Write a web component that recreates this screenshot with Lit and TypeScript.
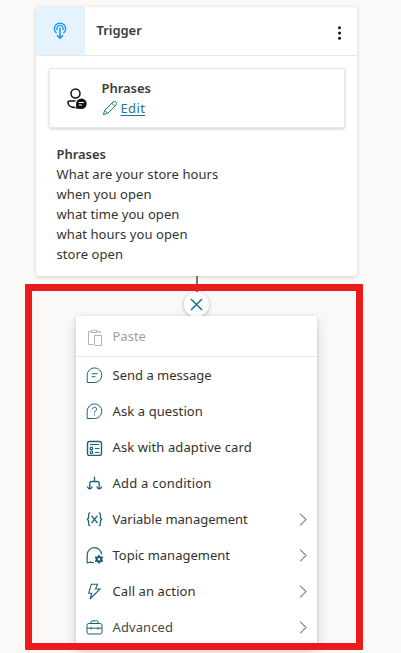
import { LitElement, html, css, svg, nothing } from 'lit';
import { customElement } from 'lit/decorators.js';

const icons = {
  paste: svg`<path d="M4.5 2.5H1.5V15.5H6M10 2.5H13V5M4.5 1.5H6Q7.2-.4 8.5 1.5H10V3.5H4.5ZM8 6.5H14.5V16.5H7.5V6.5Z"/>`,
  message: svg`<path d="M1.2 15.5V8.2A7.3 7.3 0 1 1 8.5 15.5ZM5.8 6.7H11.5M5.8 9.7H9.5"/>`,
  question: svg`<path d="M1.2 15.5V8.2A7.3 7.3 0 1 1 8.5 15.5Z"/><path d="M6.4 6.3C6.4 3.5 10.6 3.6 10.6 6.1C10.6 7.8 8.5 7.8 8.5 9.9M8.5 11.2V12.3"/>`,
  card: svg`<rect x="1.5" y="2.5" width="14" height="14" rx="2" stroke-width="1.4"/><path stroke-width="1.2" d="M4 5.5H13.3M9 9.5H13.5M9 13.5H13.5"/><circle cx="5.5" cy="9.4" r="1.3" stroke-width="1.2"/><circle cx="5.5" cy="13.3" r="1.3" stroke-width="1.2"/>`,
  condition: svg`<path stroke-width="1.3" d="M8.5 1.5V6.5M3.8 13.2V8.5Q3.8 6.5 5.8 6.5H11.2Q13.2 6.5 13.2 8.5V13.2M1.3 11.5Q2.3 13.9 3.8 13.9T6.3 11.5M10.7 11.5Q11.7 13.9 13.2 13.9T15.7 11.5"/>`,
  variable: svg`<path stroke-width="1.25" d="M4.3 1.8C2.5 1.8 2.6 3 2.6 5.6C2.6 7.6 2 8.3.8 8.3C2 8.3 2.6 9 2.6 11C2.6 13.8 2.5 14.8 4.3 14.8M12.7 1.8C14.5 1.8 14.4 3 14.4 5.6C14.4 7.6 15 8.3 16.2 8.3C15 8.3 14.4 9 14.4 11C14.4 13.8 14.5 14.8 12.7 14.8M5.5 4.6L11.5 12M11.5 4.6L5.5 12"/>`,
  topic: svg`<path stroke-width="1.2" d="M8 15.5H6L5 15.2L1.2 15.8V8A7.2 7.2 0 0 1 15.6 7.6"/><circle cx="13" cy="12.3" r="2.3" stroke-width="2.2"/><path stroke-width="1.8" d="M13 8V9.4M13 15.2V16.6M9.1 10.1L10.5 10.9M15.5 13.7L16.9 14.5M9.1 14.5L10.5 13.7M15.5 10.9L16.9 10.1"/>`,
  action: svg`<path stroke-width="1.1" d="M5.3 1.2H11.5L9.5 6H14L4 16L5.8 10.2H2.7Z"/>`,
  toolbox: svg`<rect x="1" y="4.5" width="15" height="10.5" rx="1.8"/><path d="M5 4.5V3Q5 1.8 6.2 1.8H10.8Q12 1.8 12 3V4.5M1 9.2H16M5 8V10.5M12 8V10.5"/>`,
};

type IconName = keyof typeof icons;
const icon = (name: IconName) => html`<svg class="icon" viewBox="0 0 17 17">${icons[name]}</svg>`;

const actions: { icon: IconName; label: string; more?: boolean; tone?: string }[] = [
  { icon: 'message', label: 'Send a message' },
  { icon: 'question', label: 'Ask a question', tone: 'wide' },
  { icon: 'card', label: 'Ask with adaptive card', tone: 'wide' },
  { icon: 'condition', label: 'Add a condition', tone: 'wider' },
  { icon: 'variable', label: 'Variable management', more: true },
  { icon: 'topic', label: 'Topic management', more: true },
  { icon: 'action', label: 'Call an action', more: true, tone: 'wide' },
  { icon: 'toolbox', label: 'Advanced', more: true, tone: 'last' },
];

const phrases = ['What are your store hours', 'when you open', 'what time you open', 'what hours you open', 'store open'];

@customElement('app-root')
export class AppRoot extends LitElement {
  static styles = css`
    :host { display: block; height: 653px; overflow: hidden; background: #faf9f8; color: #323130;
      font: 13px/20px "Noto Sans", "Open Sans", sans-serif; }
    * { box-sizing: border-box; }
    svg { display: block; fill: none; stroke: currentColor; flex: none; }
    .canvas { position: relative; height: 653px; padding-top: 7px; }
    .node { width: 321px; height: 269px; margin-left: 36px; background: #fff; border-radius: 4px;
      box-shadow: 0 1px 4px rgba(0,0,0,.17); }
    .head { display: flex; height: 49px; border-bottom: 1px solid #e6e6e6; }
    .badge { width: 48.5px; height: 48px; background: #e5f2ff; color: #1690f5; border-radius: 4px 0 0 0;
      display: grid; place-items: center; }
    .title { flex: 1; padding: 13px 0 0 12px; }
    .title, .strong { font-weight: 600; color: #3b3a39; letter-spacing: -.05px; }
    .dots { width: 17px; height: 20px; margin: 16px 9px 0 0; fill: #111; stroke: none; }
    .box { display: flex; height: 60px; margin: 12px 12.5px 0 12.5px; padding-left: 17.5px; background: #fff; border-radius: 2px;
      border: 1px solid #e8e8e8; box-shadow: 0 1px 3px rgba(0,0,0,.2); }
    .person { margin-top: 18px; color: #111; }
    .info { margin: 9px 0 0 14.5px; }
    .edit { display: flex; align-items: center; gap: 3px; color: #1d7894; }
    .edit span { text-decoration: underline; text-underline-offset: 2px; letter-spacing: .35px; }
    .list { padding: 16px 0 0 20.5px; letter-spacing: .07px; }
    .wire { width: 1.5px; height: 20px; margin-left: 196px; background: #77777a; }
    .close { position: absolute; left: 184px; top: 291.5px; width: 25px; height: 25px; border-radius: 50%; background: #fff;
      display: grid; place-items: center; color: #19708a; box-shadow: 0 1px 4px rgba(0,0,0,.28); }
    .menu { position: absolute; left: 76px; top: 316px; width: 241px; height: 331px; background: #fff; border-radius: 2px;
      box-shadow: 0 6px 14px rgba(0,0,0,.14), 0 1px 4px rgba(0,0,0,.13); }
    .row { display: flex; align-items: center; height: 36px; padding: 0 8.5px 0 10px; color: #323130; }
    .row .icon { width: 17px; height: 17px; color: #1b6377; margin-right: 9.5px; }
    .row span { flex: 1; }
    .row.wide span { letter-spacing: .1px; }
    .row.wider span { letter-spacing: .22px; }
    .row.last span { letter-spacing: .1px; }
    .row.paste { height: 41px; border-bottom: 1px solid #e8e8e8; color: #a19f9d; }
    .row.paste .icon { color: #b3b2b1; margin-left: 1px; margin-right: 8.5px; position: relative; top: 1px; }
    .row.last { color: #484746; }
    .chevron { color: #979089; }
    .outline { position: absolute; left: 25px; top: 284px; width: 338px; height: 366px; border: 7px solid #e91b1b; border-radius: 1px; }
  `;

  render() {
    return html`
      <div class="canvas">
        <section class="node">
          <header class="head">
            <div class="badge">
              <svg width="14" height="18" viewBox="0 0 14 18" stroke-width="1.3">
                <path d="M3.7 11.2A5.6 5.6 0 1 1 10.3 11.2M4.2 8.2A3.2 3.2 0 1 1 9.8 8.2" />
                <path stroke-width="1.5" d="M7 5.5V16M4 13.3L7 16.3L10 13.3" />
              </svg>
            </div>
            <div class="title">Trigger</div>
            <svg class="dots" viewBox="0 0 17 20">
              <circle cx="8.5" cy="4.8" r="1.5" /><circle cx="8.5" cy="10" r="1.5" /><circle cx="8.5" cy="15.3" r="1.5" />
            </svg>
          </header>
          <div class="box">
            <svg class="person" width="20" height="22" viewBox="0 0 20 22" stroke-width="1.5">
              <circle cx="8.5" cy="6.5" r="4.5" />
              <path d="M8.5 14H3Q1 14 1 15.5C1 18.5 4 20.6 8.5 20.6" />
              <circle cx="14.4" cy="16.7" r="5.3" fill="currentColor" stroke="none" />
              <path d="M9.2 17V21.8H14" fill="currentColor" stroke="none" />
              <path d="M11.8 15.5H17M11.8 18H15" stroke="#fff" stroke-width="1.1" />
            </svg>
            <div class="info">
              <div class="strong">Phrases</div>
              <div class="edit">
                <svg width="16" height="16" viewBox="0 0 16 16">
                  <path d="M1.4 14.6L2.7 10.3L11 2Q12.5.7 14 2Q15.3 3.5 14 5L5.7 13.3ZM9.8 3.2L12.8 6.2M2.7 10.3L5.7 13.3" />
                </svg>
                <span>Edit</span>
              </div>
            </div>
          </div>
          <div class="list">
            <div class="strong">Phrases</div>
            ${phrases.map((p) => html`<div>${p}</div>`)}
          </div>
        </section>
        <div class="wire"></div>
        <div class="close">
          <svg width="13" height="13" viewBox="0 0 13 13" stroke-width="1.5"><path d="M1 1L12 12M12 1L1 12" /></svg>
        </div>
        <nav class="menu">
          <div class="row paste">${icon('paste')}<span>Paste</span></div>
          ${actions.map(
            (a) => html`<div class="row ${a.tone ?? ''}">
              ${icon(a.icon)}<span>${a.label}</span>
              ${a.more
                ? html`<svg class="chevron" width="11" height="13" viewBox="0 0 11 13"><path stroke-width="1.2" d="M2.2 .8L8 6.5L2.2 12.2" /></svg>`
                : nothing}
            </div>`,
          )}
        </nav>
        <div class="outline"></div>
      </div>
    `;
  }
}
